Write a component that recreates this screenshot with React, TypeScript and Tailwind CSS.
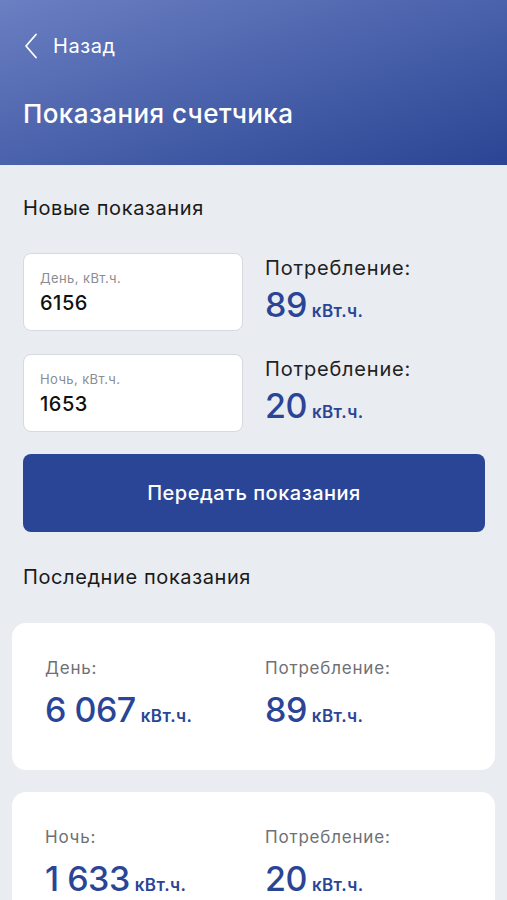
import React from "react";

const font = { fontFamily: "Inter, 'Noto Sans', sans-serif" };

function Unit() {
  return <span className="text-[17px] font-semibold ml-[5px] tracking-[0.4px]">кВт.ч.</span>;
}

function InputRow({ label, value, cons }: { label: string; value: string; cons: string }) {
  return (
    <div className="flex">
      <div className="w-[220px] h-[78px] bg-white rounded-[8px] border border-[#d6d9de] pl-[16px] pt-[15px] flex flex-col">
        <span className="text-[13px] leading-[18px] text-[#8a8d92] tracking-[0.4px]">{label}</span>
        <span className="text-[20px] leading-[26px] mt-[3px] text-[#111] font-medium tracking-[0.5px]">{value}</span>
      </div>
      <div className="ml-[22px] pt-[3px] flex flex-col">
        <span className="text-[20px] leading-[24px] text-[#222] tracking-[0.8px]">Потребление:</span>
        <div className="flex items-baseline mt-[5px] text-[#2a4596]">
          <span className="text-[34px] leading-[40px] font-medium tracking-[-0.5px]">{cons}</span>
          <Unit />
        </div>
      </div>
    </div>
  );
}

function Card({ label, value, cons }: { label: string; value: string; cons: string }) {
  return (
    <div className="mx-[12px] h-[147px] bg-white rounded-[14px] pl-[33px] pt-[33px] flex">
      <div className="w-[220px] flex flex-col">
        <span className="text-[17px] leading-[24px] text-[#6e7074] tracking-[0.8px]">{label}</span>
        <div className="flex items-baseline mt-[10px] text-[#2a4596]">
          <span className="text-[34px] leading-[40px] font-medium tracking-[-0.5px]">{value}</span>
          <Unit />
        </div>
      </div>
      <div className="flex flex-col">
        <span className="text-[17px] leading-[24px] text-[#6e7074] tracking-[0.8px]">Потребление:</span>
        <div className="flex items-baseline mt-[10px] text-[#2a4596]">
          <span className="text-[34px] leading-[40px] font-medium tracking-[-0.5px]">{cons}</span>
          <Unit />
        </div>
      </div>
    </div>
  );
}

export default function App() {
  return (
    <div style={font} className="w-[507px] h-[900px] overflow-hidden bg-[#e9ecf0]">
      <div className="h-[165px] bg-gradient-to-br from-[#6b7fc2] to-[#2b4594] px-[23px] flex flex-col">
        <div className="flex items-center h-[24px] mt-[34px]">
          <svg width="14" height="26" viewBox="0 0 14 26" fill="none" className="ml-[1px]">
            <path d="M12 1.5 L2 13 L12 24.5" stroke="white" strokeWidth="1.8" strokeLinecap="round" strokeLinejoin="round" />
          </svg>
          <span className="ml-[15px] text-white text-[20px] leading-[24px] tracking-[0.6px]">Назад</span>
        </div>
        <div className="mt-[40px] text-white text-[26px] leading-[32px] font-medium tracking-[0.4px]">Показания счетчика</div>
      </div>
      <div className="px-[23px] pt-[31px] flex flex-col">
        <div className="text-[20px] leading-[24px] text-[#1a1a1a] tracking-[0.6px]">Новые показания</div>
        <div className="mt-[33px]">
          <InputRow label="День, кВт.ч." value="6156" cons="89" />
        </div>
        <div className="mt-[23px]">
          <InputRow label="Ночь, кВт.ч." value="1653" cons="20" />
        </div>
        <button className="mt-[22px] h-[78px] w-[462px] rounded-[8px] bg-[#2a4596] text-white text-[20px] font-medium tracking-[0.5px]">
          Передать показания
        </button>
        <div className="mt-[33px] text-[20px] leading-[24px] text-[#1a1a1a] tracking-[0.6px]">Последние показания</div>
      </div>
      <div className="mt-[34px] flex flex-col gap-[22px]">
        <Card label="День:" value="6 067" cons="89" />
        <Card label="Ночь:" value="1 633" cons="20" />
      </div>
    </div>
  );
}
